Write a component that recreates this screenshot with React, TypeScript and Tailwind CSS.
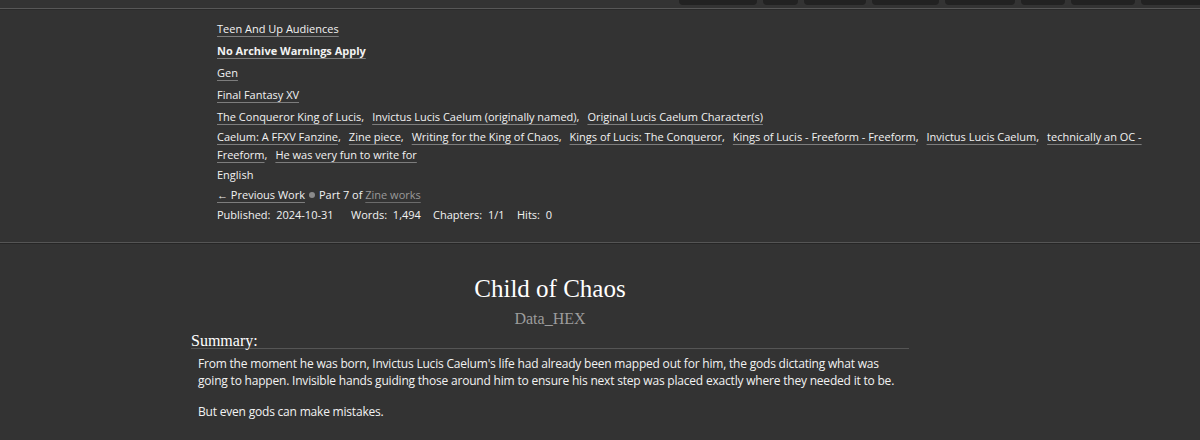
const tabs = [78, 35, 62, 67, 70, 44, 64, 64];

const Tag = ({ children, bold = false }: { children: React.ReactNode; bold?: boolean }) => (
  <span
    className={`${bold ? "font-bold" : ""} text-[#f2f2f2] underline decoration-[#7d7d7d] decoration-1 underline-offset-[3px]`}
  >
    {children}
  </span>
);

const TagList = ({ items }: { items: string[] }) => (
  <>
    {items.map((t, i) => (
      <span key={t}>
        <Tag>{t}</Tag>
        {i < items.length - 1 && <span className="mr-[8px]">,</span>}
      </span>
    ))}
  </>
);

const freeforms = [
  "Caelum: A FFXV Fanzine",
  "Zine piece",
  "Writing for the King of Chaos",
  "Kings of Lucis: The Conqueror",
  "Kings of Lucis - Freeform - Freeform",
  "Invictus Lucis Caelum",
  "technically an OC - Freeform",
  "He was very fun to write for",
];

const characters = [
  "The Conqueror King of Lucis",
  "Invictus Lucis Caelum (originally named)",
  "Original Lucis Caelum Character(s)",
];

export default function App() {
  return (
    <div className="h-[440px] w-full overflow-hidden bg-[#333333] font-['Open_Sans',sans-serif] text-[#f2f2f2]">
      {/* header strip */}
      <div className="h-[9px] border-b border-[#575757] shadow-[0_1px_0_#2a2a2a]">
        <div className="ml-[679px] flex gap-[6px]">
          {tabs.map((w, i) => (
            <div key={i} className="h-[5px] shrink-0 rounded-b-[4px] bg-[#222222]" style={{ width: w }} />
          ))}
        </div>
      </div>

      {/* work meta */}
      <div className="border-b border-[#555555] pt-[11px] pb-[18px] pl-[217px] pr-[50px] text-[11px] leading-[18px] shadow-[0_1px_0_#262626]">
        <div className="mb-[4px]">
          <Tag>Teen And Up Audiences</Tag>
        </div>
        <div className="mb-[4px]">
          <Tag bold>No Archive Warnings Apply</Tag>
        </div>
        <div className="mb-[4px]">
          <Tag>Gen</Tag>
        </div>
        <div className="mb-[4px]">
          <Tag>Final Fantasy XV</Tag>
        </div>
        <div className="mb-[2px]">
          <TagList items={characters} />
        </div>
        <div className="mb-[2px]">
          <TagList items={freeforms} />
        </div>
        <div className="mb-[2px]">English</div>
        <div className="mb-[2px] flex items-center">
          <Tag>← Previous Work</Tag>
          <span className="mx-[4px] inline-block h-[6px] w-[6px] rounded-full bg-[#8a8a8a]" />
          <span>Part 7 of&nbsp;</span>
          <span className="text-[#9a9a9a] underline decoration-[#6b6b6b] decoration-1 underline-offset-[3px]">
            Zine works
          </span>
        </div>
        <div className="flex">
          <span className="w-[134px] shrink-0">Published:&nbsp; 2024-10-31</span>
          <span className="w-[82px] shrink-0">Words:&nbsp; 1,494</span>
          <span className="w-[84px] shrink-0">Chapters:&nbsp; 1/1</span>
          <span>Hits:&nbsp; 0</span>
        </div>
      </div>

      {/* preface */}
      <div className="mx-auto w-[718px] -translate-x-[50px] pt-[31px]">
        <h2 className="text-center font-['Liberation_Serif',serif] text-[25px] leading-[30px] text-white">
          Child of Chaos
        </h2>
        <h3 className="mt-[3px] text-center font-['Liberation_Serif',serif] text-[16px] leading-[24px] text-[#9c9c9c]">
          Data_HEX
        </h3>
        <div className="mt-[2px]">
          <h3 className="border-b border-[#555555] font-['Liberation_Serif',serif] text-[16px] leading-[15px] text-white">
            Summary:
          </h3>
          <div className="pl-[7px] pr-[6px] pt-[6px] text-[12px] leading-[17px] tracking-[-0.2px] text-[#f2f2f2]">
            <p>
              From the moment he was born, Invictus Lucis Caelum's life had already been mapped out for him, the gods
              dictating what was going to happen. Invisible hands guiding those around him to ensure his next step was
              placed exactly where they needed it to be.
            </p>
            <p className="mt-[14px]">But even gods can make mistakes.</p>
          </div>
        </div>
      </div>
    </div>
  );
}
